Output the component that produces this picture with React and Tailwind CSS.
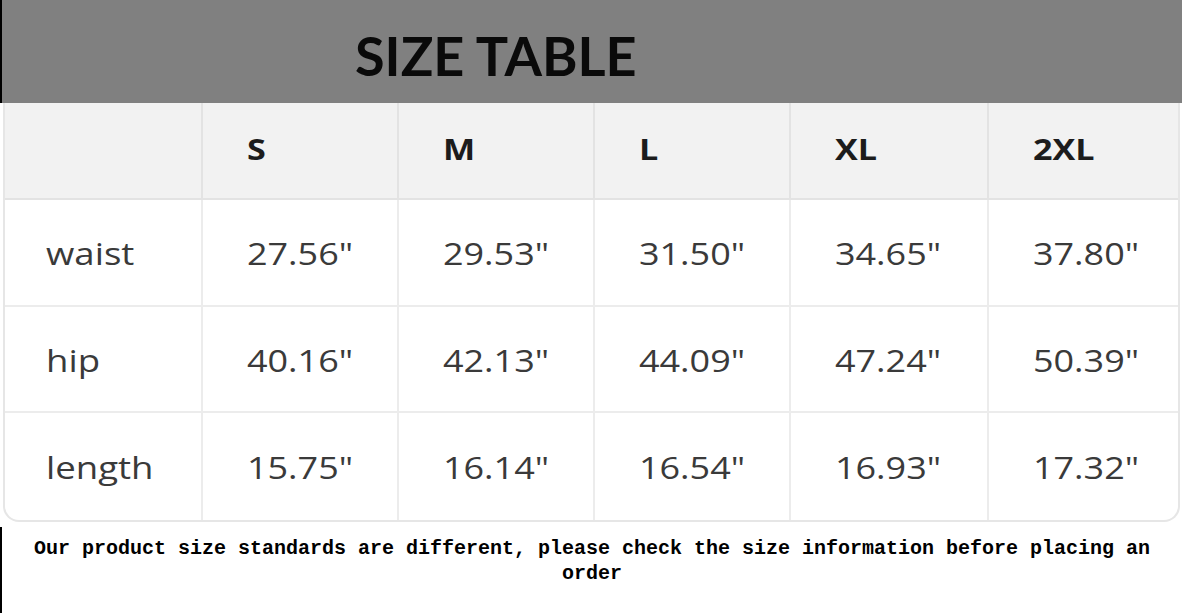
import React from "react";

const sizes = ["S", "M", "L", "XL", "2XL"];

const rows = [
  { label: "waist", values: ['27.56"', '29.53"', '31.50"', '34.65"', '37.80"'], h: "h-[107px]" },
  { label: "hip", values: ['40.16"', '42.13"', '44.09"', '47.24"', '50.39"'], h: "h-[106px]" },
  { label: "length", values: ['15.75"', '16.14"', '16.54"', '16.93"', '17.32"'], h: "h-[107px]" },
];

const cols = "grid grid-cols-[196px_196px_196px_196px_198px_1fr]";

const App = () => {
  return (
    <div className="w-[1182px] h-[613px] bg-white overflow-hidden">
      {/* title bar */}
      <div className="h-[103px] bg-[#808080] border-l-2 border-black flex items-center pl-[353px]">
        <h1 className="font-['Lato',sans-serif] font-bold text-[54px] leading-none text-[#0a0a0a] pt-[8px]">
          SIZE TABLE
        </h1>
      </div>

      {/* size table */}
      <div className="ml-[3px] mr-[2px] border-2 border-t-0 border-[#e6e6e6] rounded-b-[16px] overflow-hidden font-['Open_Sans',sans-serif]">
        <div className={`${cols} h-[97px] bg-[#f2f2f2] border-b-2 border-[#e3e3e3]`}>
          <div />
          {sizes.map((s) => (
            <div
              key={s}
              className="border-l-2 border-[#e3e3e3] flex items-center pl-[44px] pb-[4px] text-[28px] font-bold text-[#1c1c1c]"
            >
              <span className="inline-block origin-left scale-x-[1.22]">{s}</span>
            </div>
          ))}
        </div>
        {rows.map((r, i) => (
          <div
            key={r.label}
            className={`${cols} ${r.h} ${i < rows.length - 1 ? "border-b-2 border-[#ececec]" : ""}`}
          >
            <div className="flex items-center pl-[41px] pt-[2px] text-[31px] text-[#3a3a3a]">
              <span className="inline-block origin-left scale-x-[1.18]">{r.label}</span>
            </div>
            {r.values.map((v, j) => (
              <div
                key={j}
                className="border-l-2 border-[#ececec] flex items-center pl-[44px] pt-[2px] text-[31px] text-[#3a3a3a]"
              >
                <span className="inline-block origin-left scale-x-[1.16]">{v}</span>
              </div>
            ))}
          </div>
        ))}
      </div>

      {/* note */}
      <div className="mt-[5px] h-[120px] border-l-2 border-black pt-[9px] px-[10px]">
        <p className="font-['Liberation_Mono',monospace] font-bold text-[20px] leading-[25px] text-black text-center">
          Our product size standards are different, please check the size information before placing an order
        </p>
      </div>
    </div>
  );
};

export default App;
